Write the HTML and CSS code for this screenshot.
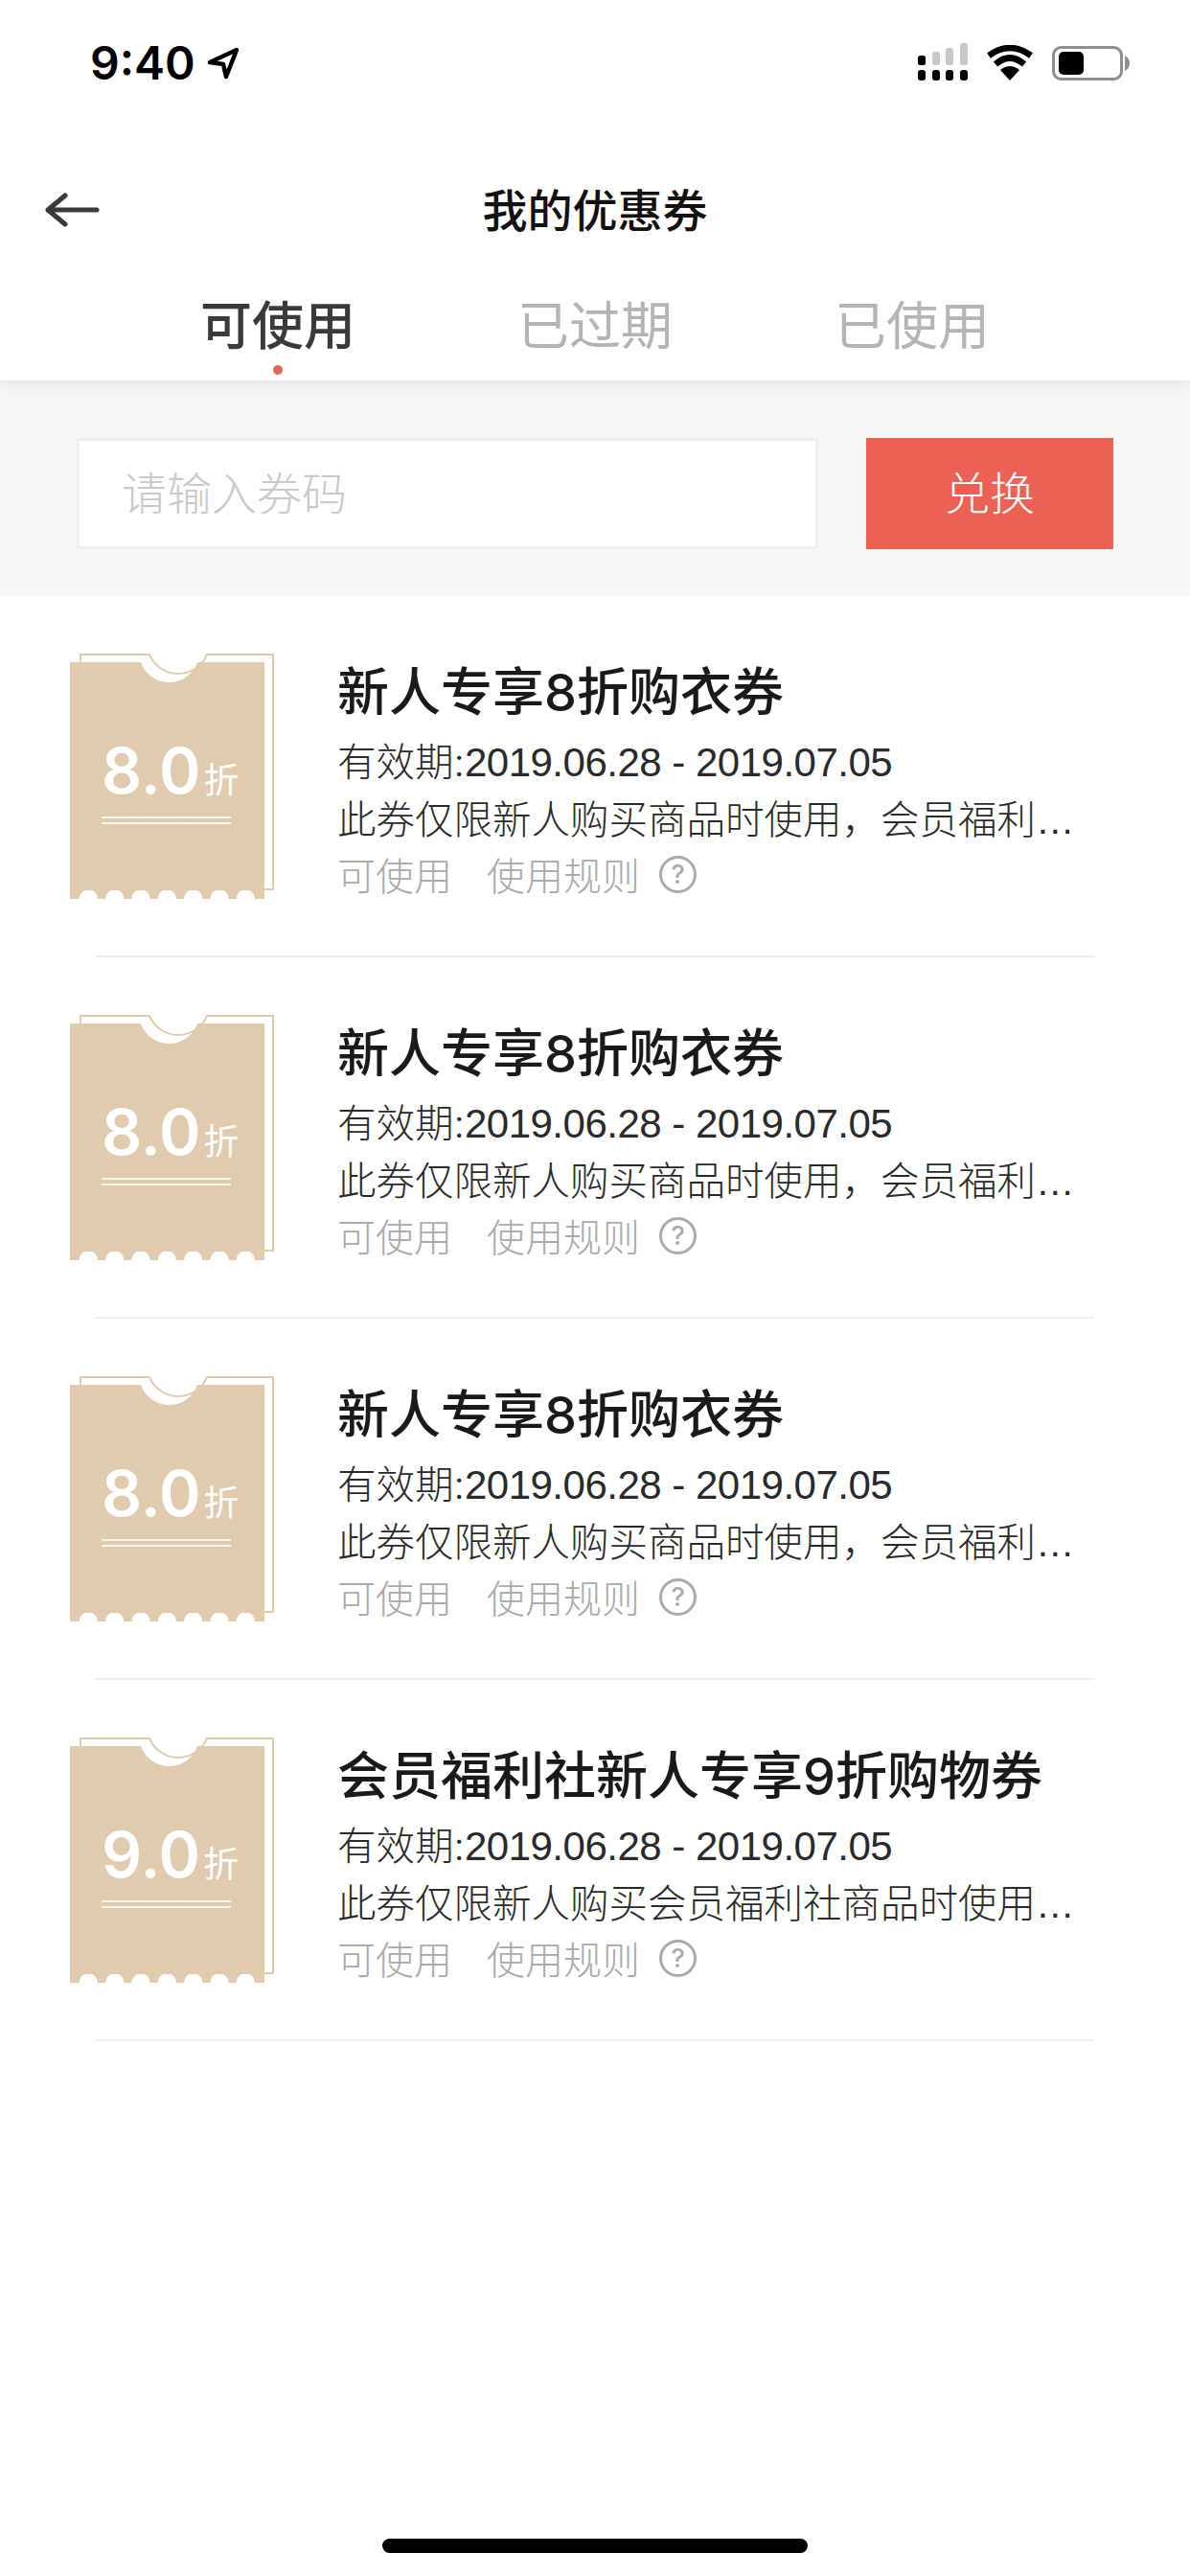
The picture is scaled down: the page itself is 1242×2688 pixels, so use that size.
FILE: index.html
```html
<!DOCTYPE html>
<html lang="zh-CN">
<head>
    <meta charset="UTF-8">
    <meta name="viewport" content="width=device-width, initial-scale=1.0">
    <title>我的优惠券</title>
    <link rel="stylesheet" href="styles.css">
</head>
<body>
    <div class="page">
        <header class="header">
            <div class="status-bar">
                <div class="status-time">
                    <span>9:40</span>
                    <svg class="status-location" width="34" height="34" viewBox="0 0 34 34">
                        <path d="M31 3 L3 16 L17 18 L20 31 Z" fill="none" stroke="#000" stroke-width="4.5" stroke-linejoin="round"/>
                    </svg>
                </div>
                <div class="status-icons">
                    <svg width="52" height="39" viewBox="0 0 52 39">
                        <rect x="15" y="9" width="8" height="14" rx="2.5" fill="#c8c8c8"/>
                        <rect x="29" y="5" width="8" height="18" rx="2.5" fill="#c8c8c8"/>
                        <rect x="44" y="0" width="8" height="23" rx="2.5" fill="#c8c8c8"/>
                        <rect x="0" y="13" width="8" height="10" rx="2.5" fill="#000"/>
                        <rect x="0" y="28" width="8" height="11" rx="3" fill="#000"/>
                        <rect x="15" y="28" width="8" height="11" rx="3" fill="#000"/>
                        <rect x="29" y="28" width="8" height="11" rx="3" fill="#000"/>
                        <rect x="44" y="28" width="8" height="11" rx="3" fill="#000"/>
                    </svg>
                    <svg class="status-wifi" width="50" height="37" viewBox="0 0 50 37">
                        <path d="M25 37 L15 26 Q25 18 35 26 Z" fill="#000"/>
                        <path d="M10 20 Q25 7 40 20" fill="none" stroke="#000" stroke-width="6.5"/>
                        <path d="M3 11 Q25 -5 47 11" fill="none" stroke="#000" stroke-width="6.5"/>
                    </svg>
                    <svg class="status-battery" width="82" height="36" viewBox="0 0 82 36">
                        <rect x="1.5" y="1.5" width="71" height="33" rx="8" fill="#fff" stroke="#8e8e8e" stroke-width="3"/>
                        <rect x="7" y="6" width="26" height="24" rx="5" fill="#000"/>
                        <path d="M76 10 Q81 13 81 18 Q81 23 76 26 Z" fill="#8e8e8e"/>
                    </svg>
                </div>
            </div>
            <div class="nav-bar">
                <svg class="nav-back" width="58" height="36" viewBox="0 0 58 36">
                    <path d="M55 18 H4 M22 3 L4 18 L22 33" fill="none" stroke="#3a3a3a" stroke-width="5" stroke-linecap="round" stroke-linejoin="round"/>
                </svg>
                <h1 class="nav-title">我的优惠券</h1>
            </div>
            <div class="tabs">
                <span class="tab active">可使用</span>
                <span class="tab">已过期</span>
                <span class="tab">已使用</span>
            </div>
        </header>

        <div class="redeem">
            <div class="redeem-input">请输入券码</div>
            <div class="redeem-btn">兑换</div>
        </div>

        <div class="coupon-list">
            <div class="coupon">
                <div class="ticket">
                    <svg class="ticket-bg" width="213" height="257" viewBox="0 0 213 257">
                        <path d="M83 1 A32.5 32.5 0 0 0 143 1 H212 V246 H11 V1 Z" fill="#fff" stroke="#e0cbae" stroke-width="2"/>
                        <path d="M0 9 H74 A31.2 31.2 0 0 0 133 9 H203 V256 H193 A9.7 10 0 0 0 173.6 256 H165.7 A9.7 10 0 0 0 146.3 256 H138.4 A9.7 10 0 0 0 119 256 H111 A9.7 10 0 0 0 91.6 256 H83.7 A9.7 10 0 0 0 64.3 256 H56.4 A9.7 10 0 0 0 37 256 H29 A9.7 10 0 0 0 9.6 256 H0 Z" fill="#e0cbae"/>
                    </svg>
                    <div class="ticket-value"><span class="ticket-num">8.0</span><span class="ticket-unit">折</span></div>
                    <div class="ticket-lines"></div>
                </div>
                <div class="coupon-info">
                    <div class="coupon-title">新人专享8折购衣券</div>
                    <div class="coupon-date">有效期:<span class="num">2019.06.28 - 2019.07.05</span></div>
                    <div class="coupon-desc">此券仅限新人购买商品时使用，会员福利…</div>
                    <div class="coupon-meta"><span>可使用</span><span class="rule">使用规则</span><span class="help">?</span></div>
                </div>
            </div>
            <div class="coupon">
                <div class="ticket">
                    <svg class="ticket-bg" width="213" height="257" viewBox="0 0 213 257">
                        <path d="M83 1 A32.5 32.5 0 0 0 143 1 H212 V246 H11 V1 Z" fill="#fff" stroke="#e0cbae" stroke-width="2"/>
                        <path d="M0 9 H74 A31.2 31.2 0 0 0 133 9 H203 V256 H193 A9.7 10 0 0 0 173.6 256 H165.7 A9.7 10 0 0 0 146.3 256 H138.4 A9.7 10 0 0 0 119 256 H111 A9.7 10 0 0 0 91.6 256 H83.7 A9.7 10 0 0 0 64.3 256 H56.4 A9.7 10 0 0 0 37 256 H29 A9.7 10 0 0 0 9.6 256 H0 Z" fill="#e0cbae"/>
                    </svg>
                    <div class="ticket-value"><span class="ticket-num">8.0</span><span class="ticket-unit">折</span></div>
                    <div class="ticket-lines"></div>
                </div>
                <div class="coupon-info">
                    <div class="coupon-title">新人专享8折购衣券</div>
                    <div class="coupon-date">有效期:<span class="num">2019.06.28 - 2019.07.05</span></div>
                    <div class="coupon-desc">此券仅限新人购买商品时使用，会员福利…</div>
                    <div class="coupon-meta"><span>可使用</span><span class="rule">使用规则</span><span class="help">?</span></div>
                </div>
            </div>
            <div class="coupon">
                <div class="ticket">
                    <svg class="ticket-bg" width="213" height="257" viewBox="0 0 213 257">
                        <path d="M83 1 A32.5 32.5 0 0 0 143 1 H212 V246 H11 V1 Z" fill="#fff" stroke="#e0cbae" stroke-width="2"/>
                        <path d="M0 9 H74 A31.2 31.2 0 0 0 133 9 H203 V256 H193 A9.7 10 0 0 0 173.6 256 H165.7 A9.7 10 0 0 0 146.3 256 H138.4 A9.7 10 0 0 0 119 256 H111 A9.7 10 0 0 0 91.6 256 H83.7 A9.7 10 0 0 0 64.3 256 H56.4 A9.7 10 0 0 0 37 256 H29 A9.7 10 0 0 0 9.6 256 H0 Z" fill="#e0cbae"/>
                    </svg>
                    <div class="ticket-value"><span class="ticket-num">8.0</span><span class="ticket-unit">折</span></div>
                    <div class="ticket-lines"></div>
                </div>
                <div class="coupon-info">
                    <div class="coupon-title">新人专享8折购衣券</div>
                    <div class="coupon-date">有效期:<span class="num">2019.06.28 - 2019.07.05</span></div>
                    <div class="coupon-desc">此券仅限新人购买商品时使用，会员福利…</div>
                    <div class="coupon-meta"><span>可使用</span><span class="rule">使用规则</span><span class="help">?</span></div>
                </div>
            </div>
            <div class="coupon">
                <div class="ticket">
                    <svg class="ticket-bg" width="213" height="257" viewBox="0 0 213 257">
                        <path d="M83 1 A32.5 32.5 0 0 0 143 1 H212 V246 H11 V1 Z" fill="#fff" stroke="#e0cbae" stroke-width="2"/>
                        <path d="M0 9 H74 A31.2 31.2 0 0 0 133 9 H203 V256 H193 A9.7 10 0 0 0 173.6 256 H165.7 A9.7 10 0 0 0 146.3 256 H138.4 A9.7 10 0 0 0 119 256 H111 A9.7 10 0 0 0 91.6 256 H83.7 A9.7 10 0 0 0 64.3 256 H56.4 A9.7 10 0 0 0 37 256 H29 A9.7 10 0 0 0 9.6 256 H0 Z" fill="#e0cbae"/>
                    </svg>
                    <div class="ticket-value"><span class="ticket-num">9.0</span><span class="ticket-unit">折</span></div>
                    <div class="ticket-lines"></div>
                </div>
                <div class="coupon-info">
                    <div class="coupon-title">会员福利社新人专享9折购物券</div>
                    <div class="coupon-date">有效期:<span class="num">2019.06.28 - 2019.07.05</span></div>
                    <div class="coupon-desc">此券仅限新人购买会员福利社商品时使用…</div>
                    <div class="coupon-meta"><span>可使用</span><span class="rule">使用规则</span><span class="help">?</span></div>
                </div>
            </div>
        </div>

        <div class="home-bar"></div>
    </div>
</body>
</html>
```

FILE: styles.css
```css
* {
    box-sizing: border-box;
}
body {
    margin: 0;
    background: #fff;
    font-family: Inter, "Noto Sans CJK SC", sans-serif;
}
.page {
    display: flex;
    flex-direction: column;
    width: 1242px;
    height: 2688px;
    overflow: hidden;
}
.header {
    position: relative;
    height: 397px;
    background: #fff;
    box-shadow: 0 4px 18px rgba(0, 0, 0, 0.09);
}
.status-bar {
    display: flex;
    justify-content: space-between;
    height: 128px;
    padding: 38px 62px 0 94px;
}
.status-time {
    display: flex;
    align-items: flex-start;
    gap: 12px;
    font-size: 48px;
    font-weight: 600;
    line-height: 56px;
    color: #000;
}
.status-location {
    margin-top: 11px;
}
.status-icons {
    display: flex;
    align-items: flex-start;
    padding-top: 7px;
}
.status-wifi {
    margin: 2px 0 0 19px;
}
.status-battery {
    margin: 3px 0 0 19px;
}
.nav-bar {
    position: relative;
    display: flex;
    justify-content: center;
    align-items: center;
    height: 183px;
}
.nav-back {
    position: absolute;
    left: 46px;
    top: 73px;
}
.nav-title {
    margin: 0;
    font-size: 47px;
    font-weight: 500;
    line-height: 60px;
    color: #111;
}
.tabs {
    display: flex;
    gap: 169px;
    padding-left: 209px;
}
.tab {
    position: relative;
    font-size: 54px;
    line-height: 60px;
    color: #b4b4b4;
}
.tab.active {
    font-weight: 500;
    color: #3a3a3a;
}
.tab.active::after {
    content: "";
    position: absolute;
    left: 76px;
    top: 70px;
    width: 10px;
    height: 10px;
    border-radius: 50%;
    background: #ec6255;
}
.redeem {
    display: flex;
    gap: 50px;
    height: 225px;
    padding: 60px 80px 49px;
    background: #f7f7f7;
}
.redeem-input {
    width: 774px;
    padding-left: 44px;
    border: 3px solid #eeeeee;
    background: #fff;
    font-size: 47px;
    font-weight: 300;
    line-height: 110px;
    color: #c9c9c9;
}
.redeem-btn {
    width: 258px;
    background: #ec6255;
    font-size: 47px;
    font-weight: 300;
    line-height: 116px;
    text-align: center;
    color: #fff;
}
.coupon {
    display: flex;
    height: 377px;
    margin: 0 100px 0 99px;
    padding-top: 60px;
    border-bottom: 2px solid #eeeeee;
}
.ticket {
    position: relative;
    flex: none;
    width: 213px;
    height: 257px;
    margin: 0 66px 0 -26px;
    padding: 87px 0 0 33px;
    color: #fff;
}
.ticket-bg {
    position: absolute;
    left: 0;
    top: 0;
}
.ticket-value {
    position: relative;
    display: flex;
    align-items: baseline;
    gap: 3px;
    height: 70px;
    line-height: 70px;
}
.ticket-num {
    font-size: 66px;
    font-weight: 600;
}
.ticket-unit {
    font-size: 37px;
    font-weight: 400;
}
.ticket-lines {
    position: relative;
    width: 135px;
    height: 8px;
    margin: 13px 0 0;
    border-top: 2px solid rgba(255, 255, 255, 0.8);
    border-bottom: 2px solid rgba(255, 255, 255, 0.8);
}
.coupon-info {
    flex: 1;
    min-width: 0;
    padding-top: 11px;
}
.coupon-title {
    font-size: 54px;
    font-weight: 500;
    line-height: 60px;
    color: #1a1a1a;
}
.coupon-date,
.coupon-desc {
    font-size: 40.5px;
    font-weight: 300;
    line-height: 60px;
    color: #2a2a2a;
}
.coupon-date {
    margin-top: 13px;
}
.coupon-date .num {
    font-family: "Liberation Sans", sans-serif;
    font-size: 42px;
    font-weight: 400;
    letter-spacing: -0.5px;
}
.coupon-desc {
    font-family: "Liberation Sans", "Noto Sans CJK SC", sans-serif;
}
.coupon-meta {
    display: flex;
    align-items: center;
    height: 60px;
    margin-top: -4px;
    font-size: 40px;
    font-weight: 300;
    color: #aaaaaa;
}
.rule {
    margin-left: 36px;
}
.help {
    width: 39px;
    height: 39px;
    margin-left: 20px;
    border: 3px solid #aaaaaa;
    border-radius: 50%;
    font-size: 27px;
    font-weight: 500;
    line-height: 33px;
    text-align: center;
}
.home-bar {
    align-self: center;
    width: 444px;
    height: 15px;
    margin: auto 0 24px;
    border-radius: 8px;
    background: #000;
}
```
